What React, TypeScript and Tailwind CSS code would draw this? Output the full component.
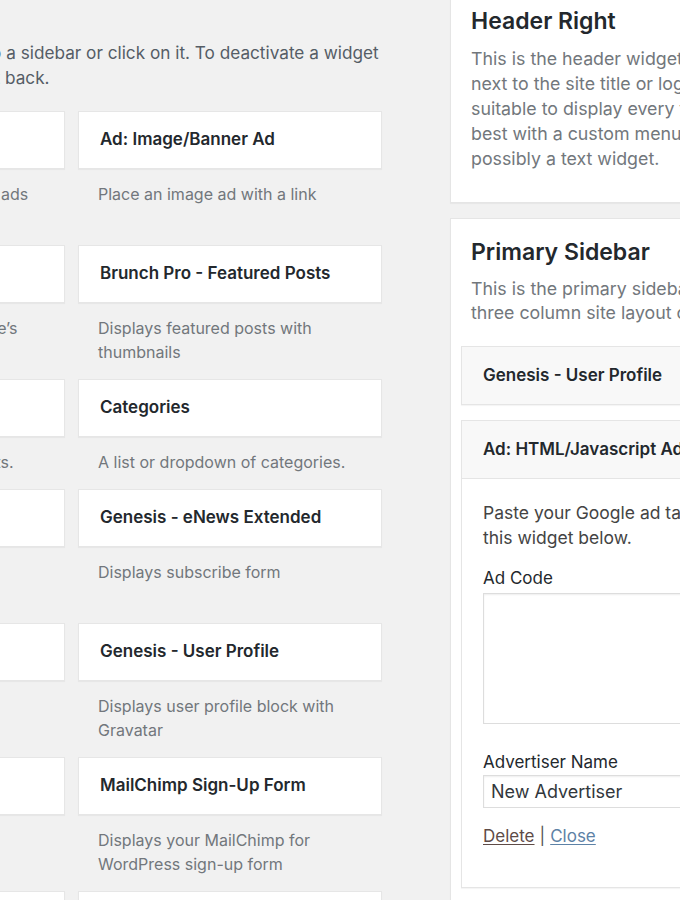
import React from 'react';

type Widget = { title: string; desc: string[] };

// available widgets, two per row (left column is mostly scrolled off)
const rows: [Widget, Widget][] = [
  [
    { title: 'Ad: HTML/Javascript Ad', desc: ['Paste AdSense tags or other ads', 'or scripts'] },
    { title: 'Ad: Image/Banner Ad', desc: ['Place an image ad with a link'] },
  ],
  [
    { title: 'Archives', desc: ['A monthly archive of your site’s', 'Posts.'] },
    { title: 'Brunch Pro - Featured Posts', desc: ['Displays featured posts with', 'thumbnails'] },
  ],
  [
    { title: 'Calendar', desc: ['A calendar of your site’s Posts.'] },
    { title: 'Categories', desc: ['A list or dropdown of categories.'] },
  ],
  [
    { title: 'Custom Menu', desc: ['Add a custom menu to your', 'sidebar.'] },
    { title: 'Genesis - eNews Extended', desc: ['Displays subscribe form'] },
  ],
  [
    { title: 'Genesis - Featured Page', desc: ['Displays featured page with', 'thumbnails'] },
    { title: 'Genesis - User Profile', desc: ['Displays user profile block with', 'Gravatar'] },
  ],
  [
    { title: 'Image', desc: ['Displays an image.', 'Or a gallery'] },
    { title: 'MailChimp Sign-Up Form', desc: ['Displays your MailChimp for', 'WordPress sign-up form'] },
  ],
  [
    { title: 'Meta', desc: ['Login, RSS, & WordPress.org links.'] },
    { title: 'Pages', desc: ['A list of your site’s Pages.'] },
  ],
];

const font = { fontFamily: 'Inter, "Liberation Sans", sans-serif' };

function WidgetCell({ w }: { w: Widget }) {
  return (
    <div>
      <div className="h-[58px] flex items-center px-[21px] bg-white border border-[#e6e6e6] shadow-[0_1px_1px_rgba(0,0,0,0.04)]">
        <span className="text-[17px] font-semibold text-[#23282d] whitespace-nowrap">{w.title}</span>
      </div>
      <div className="pt-[13px] pb-[15px] px-[20px] text-[16px] leading-[24px] text-[#72777c] whitespace-nowrap">
        {w.desc.map((l, i) => (
          <div key={i}>{l}</div>
        ))}
      </div>
    </div>
  );
}

function SidebarWidget({ title, open }: { title: string; open?: boolean }) {
  return (
    <div className="border border-[#e5e5e5] shadow-[0_1px_1px_rgba(0,0,0,0.04)]">
      <div className="h-[57px] flex items-center px-[21px] bg-[#f8f8f8]">
        <span className="text-[17px] font-semibold text-[#23282d] whitespace-nowrap">{title}</span>
      </div>
      {open && (
        <div className="border-t border-[#e5e5e5] bg-white pl-[21px] pt-[21px] pb-[38px]">
          <div className="text-[17.5px] leading-[25px] text-[#444] whitespace-nowrap">
            <div>Paste your Google ad tag or any other HTML code into</div>
            <div>this widget below.</div>
          </div>
          <div className="mt-[16px] text-[17px] leading-[25px] text-[#23282d]">Ad Code</div>
          <textarea
            className="mt-[2px] block w-[400px] h-[131px] border border-[#ddd] shadow-[inset_0_1px_2px_rgba(0,0,0,0.07)] bg-white resize-none outline-none"
            defaultValue=""
          />
          <div className="mt-[26px] text-[17px] leading-[25px] text-[#23282d]">Advertiser Name</div>
          <input
            className="block w-[400px] h-[33px] px-[7px] border border-[#ddd] shadow-[inset_0_1px_2px_rgba(0,0,0,0.07)] text-[18px] text-[#32373c] outline-none"
            style={font}
            defaultValue="New Advertiser"
          />
          <div className="mt-[16px] text-[17px] leading-[25px] text-[#555]">
            <a href="#" className="text-[#5e4b47] underline underline-offset-2">Delete</a>
            <span className="mx-[5px]">|</span>
            <a href="#" className="text-[#5d82a6] underline underline-offset-2">Close</a>
          </div>
        </div>
      )}
    </div>
  );
}

export default function App() {
  return (
    <div className="w-[680px] h-[900px] overflow-hidden bg-[#f1f1f1] flex" style={font}>
      {/* available widgets */}
      <div className="w-[450px] shrink-0">
        <div className="ml-[-239px] w-[621px]">
          <p className="pt-[40px] text-[17.2px] leading-[25px] text-[#555d66] whitespace-nowrap">
            To activate a widget drag it to a sidebar or click on it. To deactivate a widget
            <br />
            and delete its settings, drag it back.
          </p>
          <div className="mt-[21px] grid grid-cols-[304px_304px] gap-x-[13px]">
            {rows.map(([l, r], i) => (
              <React.Fragment key={i}>
                <WidgetCell w={l} />
                <WidgetCell w={r} />
              </React.Fragment>
            ))}
          </div>
        </div>
      </div>

      {/* sidebars */}
      <div className="flex flex-col gap-[15px] mt-[-13px]">
        <div className="w-[440px] bg-white border border-[#e5e5e5] shadow-[0_1px_1px_rgba(0,0,0,0.04)] pt-[18px] pb-[31px] pl-[20px]">
          <h2 className="text-[23px] leading-[30px] font-semibold text-[#23282d]">Header Right</h2>
          <div className="mt-[10px] text-[17.8px] leading-[25px] text-[#72777c] whitespace-nowrap">
            <div>This is the header widget area. It typically appears</div>
            <div>next to the site title or logo. This widget area is not</div>
            <div>suitable to display every type of widget, and works</div>
            <div>best with a custom menu, a search form, or</div>
            <div>possibly a text widget.</div>
          </div>
        </div>

        <div className="w-[440px] bg-white border border-[#e5e5e5] shadow-[0_1px_1px_rgba(0,0,0,0.04)] pt-[18px] pb-[30px] pl-[10px]">
          <div className="pl-[10px]">
            <h2 className="text-[23px] leading-[30px] font-semibold text-[#23282d]">Primary Sidebar</h2>
            <div className="mt-[10px] text-[17.8px] leading-[24px] text-[#72777c] whitespace-nowrap">
              <div>This is the primary sidebar if you are using a two or</div>
              <div>three column site layout option.</div>
            </div>
          </div>
          <div className="mt-[21px] flex flex-col gap-[15px]">
            <SidebarWidget title="Genesis - User Profile" />
            <SidebarWidget title="Ad: HTML/Javascript Ad" open />
          </div>
        </div>
      </div>
    </div>
  );
}
